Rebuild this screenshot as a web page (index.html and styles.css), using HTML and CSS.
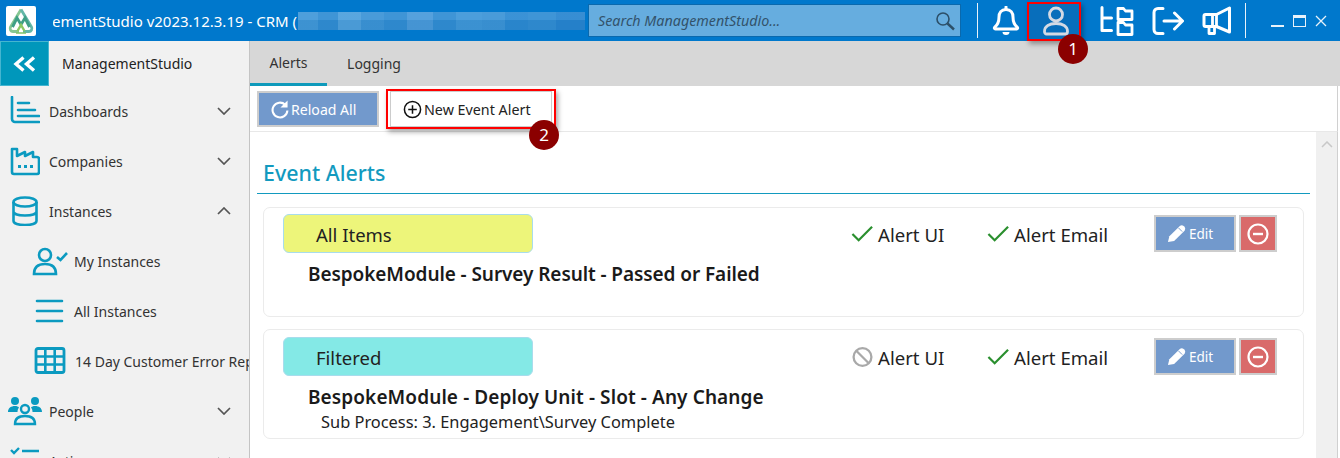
FILE: index.html
```html
<!DOCTYPE html>
<html lang="en">
<head>
<meta charset="utf-8">
<title>ManagementStudio</title>
<link rel="stylesheet" href="styles.css">
</head>
<body>
<div class="app">
  <header class="titlebar">
    <div class="logo">
      <svg viewBox="0 0 30 30" width="30" height="30"><path d="M15 3.500 4.500 21a3 3 0 0 0 2.500 4.500h6" fill="none" stroke="#86c793" stroke-width="2.800"/><path d="M15 3.500 25.500 21a3 3 0 0 1-2.500 4.500h-6" fill="none" stroke="#63b7a8" stroke-width="2.800"/><path d="M6.500 21 11 12l4 6.500L19 12l4.500 9" fill="none" stroke="#3f9f86" stroke-width="2.800"/><path d="M11.500 25l3.500-6 3.500 6" fill="none" stroke="#8cc863" stroke-width="2.400"/><path d="M10 27h10" stroke="#7fc26a" stroke-width="1.500"/></svg>
    </div>
    <div class="title"><span>ManagementStudio v2023.12.3.19 - CRM (</span></div>
    <div class="redacted"></div>
    <div class="search">
      <span>Search ManagementStudio...</span>
      <svg viewBox="0 0 20 20" width="20" height="20"><circle cx="8" cy="8" r="6" fill="none" stroke="#2c4f68" stroke-width="1.600"/><path d="M12.500 12.500 19 18.500" stroke="#2c4f68" stroke-width="2.400"/></svg>
    </div>
    <div class="sep sep-a"></div>
    <svg class="top-ico bell" viewBox="0 0 28 30"><path d="M14 3.500c-4.800 0-7 3.500-7 7.500 0 6-1.500 8-4.200 10.200-.8.700-.4 1.800.6 1.800h21.200c1 0 1.400-1.100.6-1.800C22.500 19 21 17 21 11c0-4-2.200-7.500-7-7.500Z" fill="none" stroke="#fff" stroke-width="3" stroke-linejoin="round"/><path d="M14 1v2.500" stroke="#fff" stroke-width="3" stroke-linecap="round"/><path d="M10.500 26h7a3.500 3 0 0 1-7 0Z" fill="#fff"/></svg>
    <svg class="top-ico user" viewBox="0 0 30 30"><circle cx="15" cy="8.500" r="6.500" fill="none" stroke="#fff" stroke-width="2.800"/><path d="M3.500 25.500c0-5.500 5-8 11.500-8s11.500 2.500 11.500 8c0 1.500-.8 2.500-2.200 2.500H5.700c-1.400 0-2.200-1-2.200-2.500Z" fill="none" stroke="#fff" stroke-width="2.800"/></svg>
    <svg class="top-ico folders" viewBox="0 0 34 30"><path d="M2 1.500v23h9.500M2 12h9.500" fill="none" stroke="#fff" stroke-width="3" stroke-linecap="round" stroke-linejoin="round"/><path d="M18 2.500h5.500l2 2.500H32v8.500H18ZM18 16.500h5.500l2 2.500H32v9.500H18Z" fill="none" stroke="#fff" stroke-width="2.800" stroke-linejoin="round"/></svg>
    <svg class="top-ico exit" viewBox="0 0 32 30"><path d="M11 2.500H6a4 4 0 0 0-4 4v17a4 4 0 0 0 4 4h5" fill="none" stroke="#fff" stroke-width="3" stroke-linecap="round"/><path d="M12 15h18M22.500 7l8 8-8 8" fill="none" stroke="#fff" stroke-width="3" stroke-linecap="round" stroke-linejoin="round"/></svg>
    <svg class="top-ico mega" viewBox="0 0 31 30"><path d="M3.500 8.500H14.500L27.500 2V26L14.500 20.500H3.500C2.500 20.500 2 20 2 19V10C2 9 2.500 8.500 3.500 8.500Z" fill="none" stroke="#fff" stroke-width="3" stroke-linejoin="round"/><path d="M7 20.500V27.500H12.500V20.500M10.500 8.500V20.500M14.500 8.500V20.500" fill="none" stroke="#fff" stroke-width="2.800" stroke-linejoin="round"/></svg>
    <div class="sep sep-b"></div>
    <div class="win-btns">
      <span class="win-min"></span>
      <span class="win-max"></span>
      <svg class="win-close" viewBox="0 0 12 12" width="12" height="12"><path d="M1 1l10 10M11 1 1 11" stroke="#e8f2fa" stroke-width="1.300"/></svg>
    </div>
  </header>

  <div class="body">
    <aside class="sidebar">
      <div class="side-head">
        <div class="collapse"><svg viewBox="0 0 24 16" width="24" height="16"><path d="M10.500 1.500 3 8l7.500 6.500M21 1.500 13.500 8 21 14.500" fill="none" stroke="#fff" stroke-width="3.400"/></svg></div>
        <span>ManagementStudio</span>
      </div>
      <div class="nav">
        <div class="nav-row">
          <svg class="nav-ico" viewBox="0 0 30 30"><path d="M2 1v22a3 3 0 0 0 3 3h24" fill="none" stroke="#0b9ac0" stroke-width="2.600" stroke-linecap="round"/><path d="M8 7h11M8 14h17M8 20h21" stroke="#0b9ac0" stroke-width="2.600" stroke-linecap="round"/></svg>
          <span class="nav-label">Dashboards</span>
          <svg class="chev" viewBox="0 0 14 8"><path d="M1 1l6 6 6-6" fill="none" stroke="#555" stroke-width="1.700"/></svg>
        </div>
        <div class="nav-row">
          <svg class="nav-ico" viewBox="0 0 30 30"><path d="M2 3h5v7l8-4v4l8-4v5h4a2 2 0 0 1 2 2v13a2 2 0 0 1-2 2H4a2 2 0 0 1-2-2Z" fill="none" stroke="#0b9ac0" stroke-width="2.600" stroke-linejoin="round"/><path d="M8 19h3v3H8ZM14 19h3v3h-3ZM20 19h3v3h-3Z" fill="#0b9ac0"/></svg>
          <span class="nav-label">Companies</span>
          <svg class="chev" viewBox="0 0 14 8"><path d="M1 1l6 6 6-6" fill="none" stroke="#555" stroke-width="1.700"/></svg>
        </div>
        <div class="nav-row">
          <svg class="nav-ico" viewBox="0 0 30 30"><ellipse cx="15" cy="6" rx="11.500" ry="4.500" fill="none" stroke="#0b9ac0" stroke-width="2.600"/><path d="M3.500 6v19c0 2.500 5 4 11.500 4s11.500-1.500 11.500-4V6M3.500 15.500c0 2.500 5 4 11.500 4s11.500-1.500 11.500-4" fill="none" stroke="#0b9ac0" stroke-width="2.600"/></svg>
          <span class="nav-label">Instances</span>
          <svg class="chev" viewBox="0 0 14 8"><path d="M1 7l6-6 6 6" fill="none" stroke="#555" stroke-width="1.700"/></svg>
        </div>
        <div class="nav-row sub">
          <svg class="sub-ico" viewBox="0 0 36 30"><circle cx="13" cy="9" r="6" fill="none" stroke="#0b9ac0" stroke-width="2.600"/><path d="M2 28c0-7 4-10 11-10s11 3 11 10Z" fill="none" stroke="#0b9ac0" stroke-width="2.600"/><path d="M25 11l3.500 3L35 7" fill="none" stroke="#0b9ac0" stroke-width="2.600"/></svg>
          <span class="nav-label">My Instances</span>
        </div>
        <div class="nav-row sub">
          <svg class="sub-ico" viewBox="0 0 36 30"><path d="M5 5h25M5 15h25M5 25h25" stroke="#0b9ac0" stroke-width="2.600" stroke-linecap="round"/></svg>
          <span class="nav-label">All Instances</span>
        </div>
        <div class="nav-row sub">
          <svg class="sub-ico" viewBox="0 0 36 30"><rect x="4" y="2.500" width="28" height="24" rx="2" fill="none" stroke="#0b9ac0" stroke-width="2.800"/><path d="M4 10.500h28M4 18.500h28M13.300 2.500v24M22.700 2.500v24" stroke="#0b9ac0" stroke-width="2.600"/></svg>
          <span class="nav-label clip">14 Day Customer Error Report</span>
        </div>
        <div class="nav-row">
          <svg class="nav-ico people" viewBox="0 0 36 30"><circle cx="8" cy="5" r="4" fill="#0b9ac0"/><circle cx="28" cy="5" r="4" fill="#0b9ac0"/><path d="M1 16c0-4 3-6 7-6 2 0 3 .5 4 1.500-1 1-1.500 3-1.500 4.500ZM35 16c0-4-3-6-7-6-2 0-3 .5-4 1.500 1 1 1.500 3 1.500 4.500Z" fill="#0b9ac0"/><circle cx="18" cy="13" r="4" fill="none" stroke="#0b9ac0" stroke-width="2.400"/><path d="M8 28c0-6 4-8 10-8s10 2 10 8Z" fill="none" stroke="#0b9ac0" stroke-width="2.400"/></svg>
          <span class="nav-label">People</span>
          <svg class="chev" viewBox="0 0 14 8"><path d="M1 1l6 6 6-6" fill="none" stroke="#555" stroke-width="1.700"/></svg>
        </div>
        <div class="nav-row">
          <svg class="nav-ico" viewBox="0 0 30 30"><path d="M1 4l3 3 5-5" fill="none" stroke="#0b9ac0" stroke-width="2.400"/><path d="M12 5h17M2 15h27M2 25h27" stroke="#0b9ac0" stroke-width="2.600"/></svg>
          <span class="nav-label">Actions</span>
          <svg class="chev" viewBox="0 0 14 8"><path d="M1 1l6 6 6-6" fill="none" stroke="#555" stroke-width="1.700"/></svg>
        </div>
      </div>
    </aside>

    <main class="content">
      <nav class="tabs">
        <div class="tab active">Alerts</div>
        <div class="tab tab-wide">Logging</div>
      </nav>
      <div class="toolbar">
        <button class="btn btn-blue">
          <svg viewBox="0 0 20 20" width="19" height="19"><path d="M16 5a7.800 7.800 0 1 0 2.300 6" fill="none" stroke="#fff" stroke-width="2.200"/><path d="M18.500 .5v7.500H11Z" fill="#fff"/></svg>
          <span>Reload All</span>
        </button>
        <button class="btn btn-white">
          <svg viewBox="0 0 20 20" width="19" height="19"><circle cx="10" cy="10" r="8.500" fill="none" stroke="#111" stroke-width="1.600"/><path d="M10 5.500v9M5.500 10h9" stroke="#111" stroke-width="1.600"/></svg>
          <span>New Event Alert</span>
        </button>
      </div>
      <div class="panel">
        <section class="alerts">
          <h1 class="heading">Event Alerts</h1>
          <article class="card card-first">
            <div class="card-top">
              <div class="pill pill-yellow">All Items</div>
              <div class="flag flag-ui"><svg viewBox="0 0 24 18" width="23" height="18"><path d="M1.500 9 8 15.500 22 1.500" fill="none" stroke="#2a8f2e" stroke-width="2.300"/></svg><span>Alert UI</span></div>
              <div class="flag flag-email"><svg viewBox="0 0 24 18" width="23" height="18"><path d="M1.500 9 8 15.500 22 1.500" fill="none" stroke="#2a8f2e" stroke-width="2.300"/></svg><span>Alert Email</span></div>
              <button class="btn-edit"><svg viewBox="0 0 20 20" width="19" height="19"><path d="M1 19l1.500-6L13.500 2q2-1.500 4 0l1 1q1.500 2 0 4L7.500 18Z" fill="#fff"/><path d="M12 4l4 4" stroke="#7299cc" stroke-width="1"/></svg><span>Edit</span></button>
              <button class="btn-del"><svg viewBox="0 0 22 22" width="22" height="22"><circle cx="11" cy="11" r="9.500" fill="none" stroke="#fff" stroke-width="2.200"/><path d="M6 11h10" stroke="#fff" stroke-width="2.400"/></svg></button>
            </div>
            <div class="card-name">BespokeModule - Survey Result - Passed or Failed</div>
          </article>
          <article class="card">
            <div class="card-top">
              <div class="pill pill-cyan">Filtered</div>
              <div class="flag flag-ui"><svg viewBox="0 0 24 22" width="23" height="22"><circle cx="12" cy="11" r="9.300" fill="none" stroke="#a9a9a9" stroke-width="2.400"/><path d="M5.500 4.500l13 13" stroke="#a9a9a9" stroke-width="2.400"/></svg><span>Alert UI</span></div>
              <div class="flag flag-email"><svg viewBox="0 0 24 18" width="23" height="18"><path d="M1.500 9 8 15.500 22 1.500" fill="none" stroke="#2a8f2e" stroke-width="2.300"/></svg><span>Alert Email</span></div>
              <button class="btn-edit"><svg viewBox="0 0 20 20" width="19" height="19"><path d="M1 19l1.500-6L13.500 2q2-1.500 4 0l1 1q1.500 2 0 4L7.500 18Z" fill="#fff"/><path d="M12 4l4 4" stroke="#7299cc" stroke-width="1"/></svg><span>Edit</span></button>
              <button class="btn-del"><svg viewBox="0 0 22 22" width="22" height="22"><circle cx="11" cy="11" r="9.500" fill="none" stroke="#fff" stroke-width="2.200"/><path d="M6 11h10" stroke="#fff" stroke-width="2.400"/></svg></button>
            </div>
            <div class="card-name">BespokeModule - Deploy Unit - Slot - Any Change</div>
            <div class="card-sub">Sub Process: 3. Engagement\Survey Complete</div>
          </article>
        </section>
        <div class="scrollbar">
          <div class="scroll-up"><svg viewBox="0 0 12 7" width="12" height="7"><path d="M1 6l5-5 5 5" fill="none" stroke="#c8c8c8" stroke-width="1.500"/></svg></div>
        </div>
      </div>
    </main>
  </div>

  <div class="mark mark-user"></div>
  <div class="badge badge-1">1</div>
  <div class="mark mark-new"></div>
  <div class="badge badge-2">2</div>
</div>
</body>
</html>
```
FILE: styles.css
```css
* { box-sizing: border-box; }
html, body { margin: 0; padding: 0; }
body { width: 1340px; height: 458px; overflow: hidden; background: #fff; font-family: "Noto Sans", "Open Sans", sans-serif; color: #222; }
.app { position: relative; width: 1340px; height: 458px; overflow: hidden; display: flex; flex-direction: column; }

.titlebar { flex: 0 0 41px; background: #0078cc; display: flex; align-items: center; position: relative; }
.logo { width: 30px; height: 30px; margin-left: 6px; background: #fff; border-radius: 2px; flex: none; }
.logo svg { display: block; }
.title { width: 244px; margin-left: 17px; overflow: hidden; display: flex; justify-content: flex-end; flex: none; color: #fff; font-size: 15px; white-space: nowrap; }
.title span { flex: none; }
.redacted { width: 287px; height: 18px; margin-left: 1px; flex: none; background:
  linear-gradient(180deg, rgba(255, 255, 255, .08) 0 45%, rgba(0, 0, 0, .03) 45% 100%),
  linear-gradient(90deg, #3f97d8 0 7%, #2f8cd3 7% 14%, #4c9fdc 14% 22%, #3a93d6 22% 30%, #2f8cd3 30% 38%, #4799da 38% 47%, #2f8cd3 47% 55%, #3d96d8 55% 64%, #3a93d6 64% 72%, #2a89d2 72% 80%, #2f8cd3 80% 90%, #2684cf 90% 100%); }
.search { width: 373px; height: 33px; margin-left: 3px; flex: none; background: #66addf; border: 1px solid #0a69ad; display: flex; align-items: center; justify-content: space-between; padding: 0 5px 0 9px; font-size: 14.300px; font-style: italic; color: #33536b; }
.sep { width: 1px; height: 35px; background: #e8f2fa; flex: none; }
.sep-a { margin-left: 16px; }
.top-ico { flex: none; height: 30px; }
.bell { width: 28px; margin-left: 14px; }
.user { width: 30px; margin-left: 21px; }
.folders { width: 34px; margin-left: 29px; }
.exit { width: 32px; margin-left: 18px; }
.mega { width: 31px; margin-left: 18px; }
.sep-b { margin-left: 12px; }
.win-btns { display: flex; align-items: center; margin-left: 25px; }
.win-min { width: 13px; height: 2px; background: #e8f2fa; margin-top: 10px; }
.win-max { width: 13px; height: 12px; margin-left: 9px; border: 1.500px solid #e8f2fa; border-top-width: 3px; }
.win-close { margin-left: 9px; }

.body { flex: 1; display: flex; min-height: 0; }
.sidebar { width: 250px; flex: none; background: #f1f1f1; border-right: 1px solid #c4c4c4; overflow: hidden; }
.side-head { height: 45px; display: flex; align-items: center; font-size: 14px; color: #222; }
.collapse { width: 49px; height: 45px; background: #0097bb; border: 1px solid #45b5d0; display: flex; align-items: center; justify-content: center; margin-right: 13px; flex: none; }
.nav-row { height: 50px; display: flex; align-items: center; position: relative; font-size: 14px; color: #333; }
.nav-ico { width: 30px; height: 30px; margin-left: 10px; flex: none; }
.nav-ico.people { width: 36px; margin-left: 7px; margin-right: -3px; }
.nav-label { margin-left: 9px; white-space: nowrap; }
.chev { position: absolute; right: 18px; top: 21px; width: 14px; height: 8px; }
.sub-ico { width: 36px; height: 30px; margin-left: 32px; flex: none; }
.sub .nav-label { margin-left: 6px; }
.sub .clip { margin-left: 7px; }

.content { flex: 1; min-width: 0; display: flex; flex-direction: column; background: #fff; }
.tabs { flex: 0 0 45px; background: #d7d7d7; display: flex; }
.tab { width: 77px; font-size: 14px; display: flex; align-items: center; justify-content: center; color: #333; padding-bottom: 1px; }
.tab-wide { width: 94px; }
.tab.active { border-bottom: 3px solid #0e9abb; padding-bottom: 0; }
.toolbar { flex: 0 0 46px; display: flex; align-items: flex-start; padding: 5px 0 0 7px; border-bottom: 1px solid #e8e8e8; border-right: 1px solid #d0d0d0; margin-right: 2px; }
.btn { height: 36px; font: inherit; display: flex; align-items: center; justify-content: flex-start; gap: 2px; padding: 0; cursor: pointer; }
.btn-blue { width: 122px; background: #7299cc; border: 2px solid #cdcdcd; color: #fff; font-size: 14.100px; padding-left: 11px; }
.btn-white { width: 162px; margin-left: 11px; background: #fff; border: 1px solid #ccc; color: #222; font-size: 14.300px; padding-left: 12px; }

.panel { flex: 1; min-height: 0; display: flex; }
.alerts { flex: 1; min-width: 0; padding: 20px 6px 0 7px; }
.heading { margin: 0 0 13px; padding: 4px 0 0 6px; font-size: 21.400px; font-weight: 500; line-height: 34px; height: 42px; color: #129abf; border-bottom: 1px solid #129abf; }
.card { margin: 0 6px 12px; height: 110px; border: 1px solid #ebebeb; border-radius: 7px; padding: 7px 0 0 19px; }
.card-first { padding-top: 6px; }
.card-top { display: flex; align-items: flex-start; height: 39px; }
.pill { width: 250px; height: 39px; border-radius: 6px; padding-left: 32px; font-size: 18.500px; line-height: 39px; flex: none; color: #222; }
.pill-yellow { background: #edf57a; border: 1px solid #a8dcec; }
.pill-cyan { background: #84e9e6; border: 1px solid #a8dcec; }
.flag { display: flex; align-items: center; gap: 4px; height: 40px; font-size: 18.600px; color: #222; flex: none; }
.flag-ui { margin-left: 318px; width: 136px; }
.flag-email { width: 167px; }
.btn-edit { width: 82px; height: 37px; margin-top: 1px; background: #7299cc; border: 2px solid #cdcdcd; color: #fff; font: inherit; font-size: 13.500px; display: flex; align-items: center; justify-content: flex-start; gap: 3px; padding: 0 0 0 11px; flex: none; }
.btn-del { width: 38px; height: 37px; margin-top: 1px; margin-left: 3px; background: #d96a6a; border: 2px solid #cdcdcd; display: flex; align-items: center; justify-content: center; padding: 0; flex: none; }
.card-name { margin: 8px 0 0 25px; font-size: 19px; font-weight: 600; line-height: 27px; letter-spacing: .1px; color: #1a1a1a; white-space: nowrap; }
.card-first .card-name { letter-spacing: -.08px; }
.card-sub { margin-left: 38px; font-size: 16.400px; line-height: 22px; color: #222; white-space: nowrap; }
.scrollbar { width: 22px; margin-right: 2px; flex: none; background: #f0f0f0; border-right: 1px solid #d0d0d0; }
.scroll-up { height: 24px; display: flex; align-items: center; justify-content: center; }

.mark { position: absolute; border: 2px solid #f00; box-shadow: 2px 3px 5px rgba(0, 0, 0, .35); }
.mark-user { left: 1027px; top: 2px; width: 54px; height: 39px; background: rgba(40, 70, 120, .2); }
.mark-new { left: 386px; top: 89px; width: 170px; height: 40px; }
.badge { position: absolute; width: 30px; height: 30px; border-radius: 50%; background: #8b0000; color: #fff; font-size: 17px; line-height: 30px; text-align: center; }
.badge-1 { left: 1058px; top: 34px; }
.badge-2 { left: 529px; top: 120px; }
```
